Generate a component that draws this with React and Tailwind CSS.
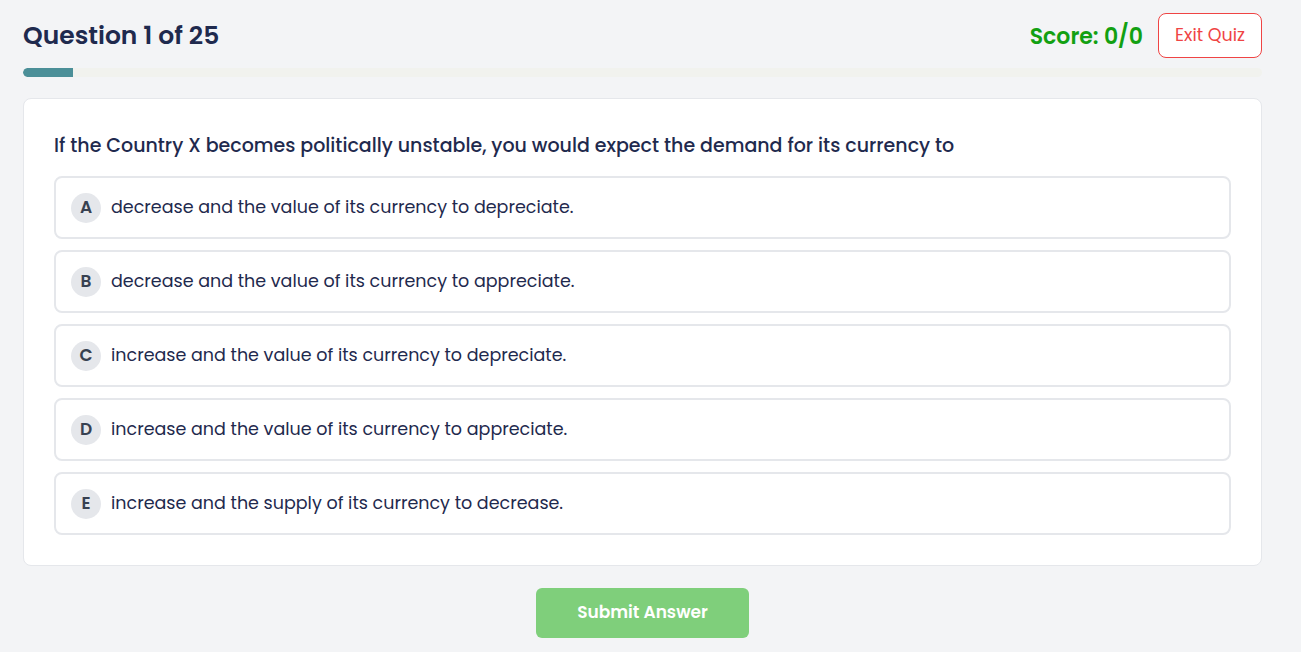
import React, { useState } from 'react';

const options = [
  { key: 'A', text: 'decrease and the value of its currency to depreciate.' },
  { key: 'B', text: 'decrease and the value of its currency to appreciate.' },
  { key: 'C', text: 'increase and the value of its currency to depreciate.' },
  { key: 'D', text: 'increase and the value of its currency to appreciate.' },
  { key: 'E', text: 'increase and the supply of its currency to decrease.' },
];

const App = () => {
  const [selected, setSelected] = useState(null);

  return (
    <div
      className="min-h-[652px] bg-[#f3f4f6] px-[23px] pt-[13px] pb-4 text-[#1f2a4e]"
      style={{ fontFamily: 'Poppins, Inter, "Noto Sans", sans-serif' }}
    >
      <div className="w-[1239px]">
        {/* header */}
        <div className="flex items-center justify-between h-[44px]">
          <h1 className="text-[25px] font-semibold text-[#1f2a4e] translate-y-[1px]">Question 1 of 25</h1>
          <div className="flex items-center gap-[15px]">
            <span className="text-[22px] font-semibold text-[#12a012] translate-y-[1px]">Score: 0/0</span>
            <button
              type="button"
              className="h-[45px] w-[104px] rounded-lg border border-[#ef4444] bg-white text-[17.5px] text-[#ef4444]"
            >
              Exit Quiz
            </button>
          </div>
        </div>

        {/* progress */}
        <div className="mt-[11px] h-[9px] w-full rounded-full bg-[#f1f2ee] overflow-hidden">
          <div className="h-full w-[50px] rounded-l-full bg-[#4b8f98]" />
        </div>

        {/* card */}
        <div className="mt-[21px] rounded-lg border border-[#e5e7eb] bg-white px-[30px] pt-[32px] pb-[30px]">
          <p className="text-[19px] font-medium leading-[30px] text-[#1f2a4e]">
            If the Country X becomes politically unstable, you would expect the demand for its currency to
          </p>
          <div className="mt-[15px] flex flex-col gap-[11px]">
            {options.map((opt) => (
              <button
                key={opt.key}
                type="button"
                onClick={() => setSelected(opt.key)}
                className={`flex h-[63px] items-center gap-[10px] rounded-lg border-2 px-[15px] text-left ${
                  selected === opt.key ? 'border-[#4b8f98] bg-[#f0f7f8]' : 'border-[#e5e7eb] bg-white'
                }`}
              >
                <span className="flex h-[30px] w-[30px] shrink-0 items-center justify-center rounded-full bg-[#e5e7eb] text-[17px] font-semibold text-[#374151]">
                  {opt.key}
                </span>
                <span className="text-[17.5px] text-[#1f2a4e]">{opt.text}</span>
              </button>
            ))}
          </div>
        </div>

        {/* submit */}
        <div className="mt-[22px] flex justify-center">
          <button
            type="button"
            className="h-[50px] w-[213px] rounded-md bg-[#7fcf7b] text-[17px] font-semibold text-white"
          >
            Submit Answer
          </button>
        </div>
      </div>
    </div>
  );
};

export default App;
